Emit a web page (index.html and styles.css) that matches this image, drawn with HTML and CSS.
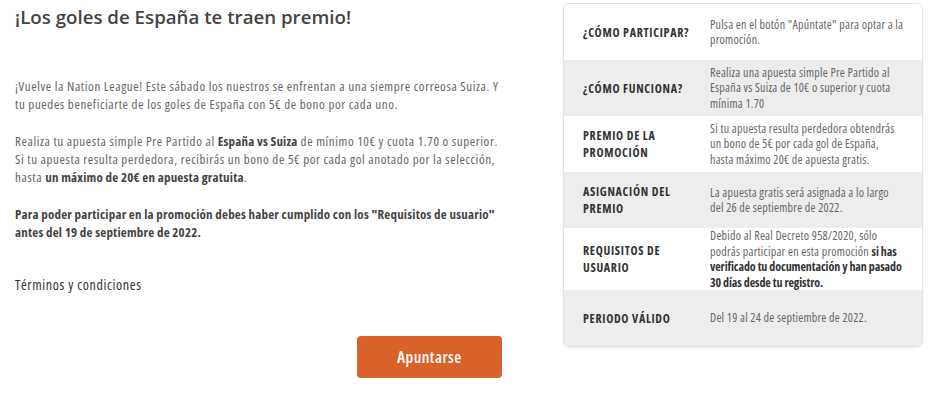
FILE: index.html
```html
<!DOCTYPE html>
<html lang="es">
<head>
    <meta charset="UTF-8">
    <title>¡Los goles de España te traen premio!</title>
    <link rel="stylesheet" href="styles.css">
</head>
<body>
<div class="page">
    <div class="promo">
        <h1 class="promo-title">¡Los goles de España te traen premio!</h1>
        <p class="promo-text first">¡Vuelve la Nation League! Este sábado los nuestros se enfrentan a una siempre correosa Suiza. Y tu puedes beneficiarte de los goles de España con 5€ de bono por cada uno.</p>
        <p class="promo-text">Realiza tu apuesta simple Pre Partido al <b>España vs Suiza</b> de mínimo 10€ y cuota 1.70 o superior. Si tu apuesta resulta perdedora, recibirás un bono de 5€ por cada gol anotado por la selección, hasta <b>un máximo de 20€ en apuesta gratuita</b>.</p>
        <p class="promo-text"><b>Para poder participar en la promoción debes haber cumplido con los "Requisitos de usuario" antes del 19 de septiembre de 2022.</b></p>
        <p class="terms">Términos y condiciones</p>
        <div class="cta">
            <a class="btn" href="#">Apuntarse</a>
        </div>
    </div>

    <div class="info">
        <div class="info-row">
            <div class="info-label">¿CÓMO PARTICIPAR?</div>
            <div class="info-value">Pulsa en el botón "Apúntate" para optar a la promoción.</div>
        </div>
        <div class="info-row">
            <div class="info-label">¿CÓMO FUNCIONA?</div>
            <div class="info-value">Realiza una apuesta simple Pre Partido al España vs Suiza de 10€ o superior y cuota mínima 1.70</div>
        </div>
        <div class="info-row">
            <div class="info-label">PREMIO DE LA PROMOCIÓN</div>
            <div class="info-value">Si tu apuesta resulta perdedora obtendrás un bono de 5€ por cada gol de España, hasta máximo 20€ de apuesta gratis.</div>
        </div>
        <div class="info-row">
            <div class="info-label">ASIGNACIÓN DEL PREMIO</div>
            <div class="info-value">La apuesta gratis será asignada a lo largo del 26 de septiembre de 2022.</div>
        </div>
        <div class="info-row">
            <div class="info-label">REQUISITOS DE USUARIO</div>
            <div class="info-value">Debido al Real Decreto 958/2020, sólo podrás participar en esta promoción <b>si has verificado tu documentación y han pasado 30 días desde tu registro.</b></div>
        </div>
        <div class="info-row">
            <div class="info-label">PERIODO VÁLIDO</div>
            <div class="info-value">Del 19 al 24 de septiembre de 2022.</div>
        </div>
    </div>
</div>
</body>
</html>
```
FILE: styles.css
```css
* {
    margin: 0;
    padding: 0;
    box-sizing: border-box;
}

body {
    font-family: "Open Sans", "DejaVu Sans", sans-serif;
    font-stretch: condensed;
    color: #666666;
    background-color: #ffffff;
}

.page {
    display: flex;
    align-items: flex-start;
    padding: 3px 17px 0 15px;
}

.promo {
    width: 492px;
}

.promo-title {
    margin-top: 2px;
    font-size: 18.7px;
    font-stretch: normal;
    line-height: 24px;
    font-weight: 600;
    color: #444444;
}

.promo-text {
    font-size: 13px;
    line-height: 18px;
    letter-spacing: .6px;
    margin-bottom: 19px;
}

.promo-text.first {
    margin-top: 48px;
}

.promo-text b {
    font-weight: 700;
    letter-spacing: .2px;
    color: #444444;
}

.terms {
    margin-top: 35px;
    font-size: 14px;
    line-height: 18px;
    letter-spacing: .65px;
    color: #333333;
}

.cta {
    display: flex;
    justify-content: flex-end;
    margin-top: 42px;
    padding-right: 5px;
}

.btn {
    display: block;
    width: 145px;
    height: 42px;
    line-height: 42px;
    text-align: center;
    background-color: #d9622b;
    border-radius: 4px;
    color: #ffffff;
    font-size: 16px;
    font-weight: 600;
    letter-spacing: .5px;
    text-decoration: none;
}

.info {
    margin-left: auto;
    width: 360px;
    border: 1px solid #e2e2e2;
    border-radius: 6px;
    overflow: hidden;
    box-shadow: 0 1px 2px rgba(0, 0, 0, .08);
}

.info-row {
    display: flex;
    align-items: center;
    min-height: 56px;
}

.info-row:nth-child(even) {
    background-color: #ededed;
}

.info-label {
    width: 146px;
    padding-left: 19px;
    padding-right: 12px;
    font-size: 12px;
    line-height: 17px;
    letter-spacing: .7px;
    font-weight: 700;
    color: #333333;
}

.info-value {
    width: 194px;
    font-size: 12px;
    line-height: 15.5px;
    letter-spacing: .25px;
    color: #666666;
}

.info-value b {
    letter-spacing: -.1px;
    color: #333333;
}
```
